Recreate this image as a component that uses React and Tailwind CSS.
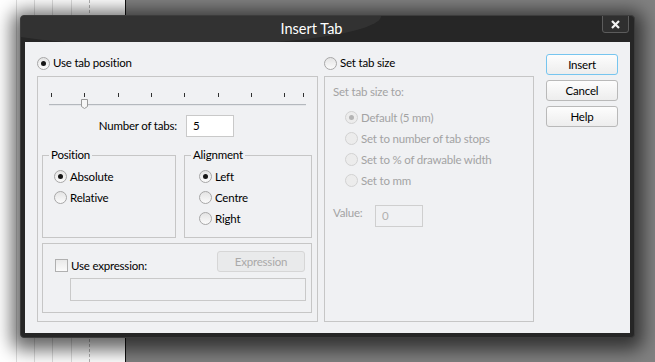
import React from 'react';

const font = { fontFamily: 'Lato, "Noto Sans", sans-serif' };

const Radio = ({ checked, disabled, label }) => (
  <div className="flex items-center h-[21px]">
    <span
      className={`w-[13px] h-[13px] rounded-full border flex items-center justify-center shrink-0 ${
        disabled
          ? 'border-[#d2d2d2] bg-[#ececec]'
          : 'border-[#a7a7a7] bg-gradient-to-b from-[#e4e4e4] to-[#fbfbfb]'
      }`}
    >
      {checked && (
        <span className={`w-[5px] h-[5px] rounded-full ${disabled ? 'bg-[#b4b4b4]' : 'bg-[#161616]'}`} />
      )}
    </span>
    <span className={`ml-[3px] whitespace-nowrap ${disabled ? 'text-[#a3a3a3]' : 'text-black'}`}>{label}</span>
  </div>
);

const Group = ({ title, className, children }) => (
  <div className={`relative border border-[#c6c6c6] ${className}`}>
    <span className="absolute -top-[9px] left-[6px] px-[2px] leading-[16px] bg-[#f0f1f3] text-black">{title}</span>
    {children}
  </div>
);

const Button = ({ children, primary }) => (
  <button
    className={`w-[72px] h-[21px] rounded-[3px] border leading-none text-black bg-gradient-to-b from-[#fdfdfd] to-[#ededed] ${
      primary ? 'border-[#76c5ef]' : 'border-[#b9b9b9]'
    }`}
  >
    {children}
  </button>
);

const Slider = () => {
  const ticks = [3, 36, 70, 103, 136, 170, 203, 236, 255];
  return (
    <svg width="260" height="20" className="block">
      {ticks.map((x) => (
        <rect key={x} x={x} y="1" width="1" height="4" fill="#303030" />
      ))}
      <rect x="1" y="12" width="257" height="1" fill="#b4b8bd" />
      <rect x="1" y="13" width="257" height="1" fill="#e4e6e9" />
      <path d="M33.5 7.5 h6 v7 l-3 2 l-3 -2 z" fill="#f6f6f6" stroke="#9a9a9a" />
    </svg>
  );
};

export default function App() {
  return (
    <div className="relative w-[655px] h-[362px] overflow-hidden flex text-[11.5px] tracking-[-0.2px]" style={font}>
      {/* desktop behind the dialog */}
      <div className="w-[125px] h-full bg-white flex">
        <div className="w-[16px]" />
        <div className="w-[18px] border-l border-[#dedede]" />
        <div className="w-[18px] border-l border-[#dedede]" />
        <div className="w-[19px] border-l border-[#dedede]" />
        <div className="w-[18px] border-l border-[#dedede]" />
        <div className="w-[18px] border-l border-dashed border-[#b5b5b5]" />
      </div>
      <div className="w-[1px] h-full bg-[#111]" />
      <div className="flex-1 h-full bg-[#818181]" />

      {/* dialog window */}
      <div className="absolute left-[20px] top-[15px] w-[615px] h-[323px] rounded-[4px] bg-[#262626] border border-[#3c3c3c] shadow-[0_4px_18px_8px_rgba(0,0,0,0.6)] flex flex-col">
        <div className="relative h-[26px] shrink-0 overflow-hidden rounded-t-[4px]">
          <div className="absolute -left-[60px] -top-[30px] w-[420px] h-[60px] rounded-[50%] bg-white/[0.06]" />
          <div className="relative flex h-full">
            <div className="w-[581px] flex items-center justify-center text-white text-[14.5px] tracking-normal">Insert Tab</div>
            <div className="w-[27px] h-[18px] -mt-[1px] rounded-b-[3px] border border-[#5c5c5c] bg-[#2f2f2f] flex items-center justify-center">
              <svg width="9" height="9" viewBox="0 0 9 9">
                <path d="M1 1 L8 8 M8 1 L1 8" stroke="#f2f2f2" strokeWidth="2.2" />
              </svg>
            </div>
          </div>
        </div>

        {/* client area */}
        <div className="mx-[4px] mb-[4px] flex-1 bg-[#f0f1f3] pt-[12px] pl-[12px] flex">
          {/* left column */}
          <div className="w-[281px] flex flex-col">
            <div className="h-[18px] flex items-center">
              <Radio checked label="Use tab position" />
            </div>
            <div className="mt-[4px] h-[246px] border border-[#c6c6c6] pt-[15px] px-[4px]">
              <div className="ml-[6px]">
                <Slider />
              </div>
              <div className="mt-[3px] flex items-center">
                <div className="w-[135px] text-right text-black">Number of tabs:</div>
                <div className="ml-[9px] w-[48px] h-[22px] border border-[#c9c9c9] bg-white flex items-center pl-[6px] text-black">5</div>
              </div>
              <div className="mt-[18px] flex gap-[8px]">
                <Group title="Position" className="w-[134px] h-[83px] pt-[10px] pl-[11px]">
                  <Radio checked label="Absolute" />
                  <Radio label="Relative" />
                </Group>
                <Group title="Alignment" className="w-[128px] h-[83px] pt-[10px] pl-[14px]">
                  <Radio checked label="Left" />
                  <Radio label="Centre" />
                  <Radio label="Right" />
                </Group>
              </div>
              <div className="mt-[5px] w-[270px] h-[70px] border border-[#c6c6c6] pt-[7px] pl-[12px] pr-[6px]">
                <div className="flex justify-between">
                  <div className="mt-[8px] flex items-center">
                    <span className="w-[13px] h-[13px] border border-[#b0b0b0] bg-gradient-to-b from-[#e9e9e9] to-[#fbfbfb]" />
                    <span className="ml-[3px] text-black leading-[13px]">Use expression:</span>
                  </div>
                  <div className="w-[88px] h-[21px] rounded-[3px] border border-[#d6d6d6] bg-[#e9eaeb] text-[#a9a9a9] flex items-center justify-center">
                    Expression
                  </div>
                </div>
                <div className="mt-[6px] ml-[15px] w-[236px] h-[23px] border border-[#c9c9c9] bg-[#f0f1f3]" />
              </div>
            </div>
          </div>

          {/* right column */}
          <div className="ml-[6px] w-[210px] flex flex-col">
            <div className="h-[18px] flex items-center">
              <Radio label="Set tab size" />
            </div>
            <div className="mt-[4px] h-[246px] border border-[#c6c6c6] pt-[7px] pl-[8px]">
              <div className="h-[16px] leading-[16px] text-[#a3a3a3]">Set tab size to:</div>
              <div className="mt-[7px] pl-[12px]">
                <Radio checked disabled label="Default (5 mm)" />
                <Radio disabled label="Set to number of tab stops" />
                <Radio disabled label="Set to % of drawable width" />
                <Radio disabled label="Set to mm" />
              </div>
              <div className="mt-[14px] flex items-start">
                <div className="w-[42px] leading-[16px] text-[#a3a3a3]">Value:</div>
                <div className="w-[48px] h-[22px] border border-[#cfcfcf] flex items-center pl-[6px] text-[#b0b0b0]">0</div>
              </div>
            </div>
          </div>

          {/* buttons */}
          <div className="ml-[12px] flex flex-col gap-[5px]">
            <Button primary>Insert</Button>
            <Button>Cancel</Button>
            <Button>Help</Button>
          </div>
        </div>
      </div>
    </div>
  );
}
